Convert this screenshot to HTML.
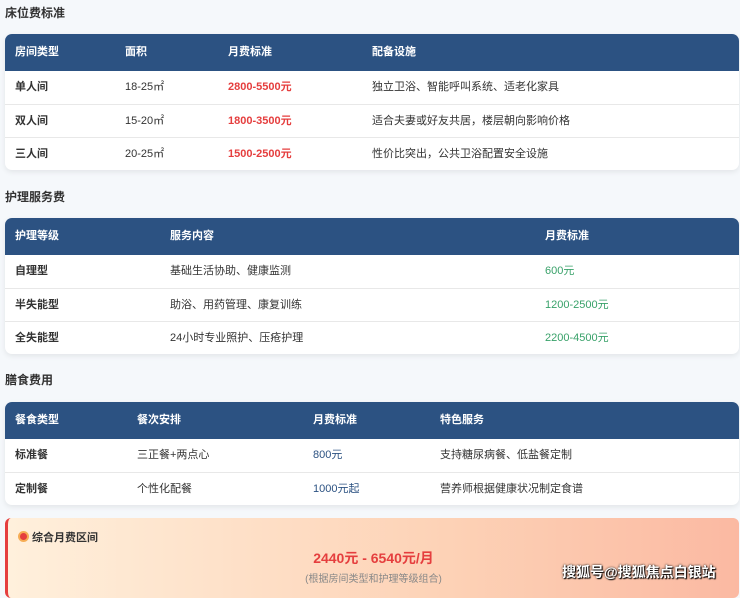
<!DOCTYPE html>
<html><head><meta charset="utf-8"><style>
body{margin:0;background:#f5f8fb;font-family:"Liberation Sans","Noto Sans CJK SC",sans-serif;font-size:11px;color:#333;width:740px;height:587px;overflow:hidden;position:relative}
h3{position:absolute;left:5px;margin:0;font-size:12px;font-weight:bold;color:#333}
.t{position:absolute;left:5px;width:734px;background:#fff;border-radius:7px;box-shadow:0 2px 6px rgba(0,0,0,.08);overflow:hidden}
.r{position:relative;height:33px;border-top:1px solid #e8e8e8;box-sizing:border-box}
.r span{position:absolute;top:0;line-height:33px;white-space:nowrap}
.h{background:#2c5282;color:#fff;font-weight:bold;height:37px;border:0}
.h span{line-height:37px}
.b{font-weight:bold}
.red{color:#e53e3e;font-weight:bold}
.g{color:#38a169}
.bl{color:#2c5282}
</style></head><body>
<h3 style="top:4px">床位费标准</h3>
<div class="t" style="top:34px">
<div class="r h"><span style="left:10px">房间类型</span><span style="left:120px">面积</span><span style="left:223px">月费标准</span><span style="left:367px">配备设施</span></div>
<div class="r" style="border:0"><span class="b" style="left:10px">单人间</span><span style="left:120px">18-25㎡</span><span class="red" style="left:223px">2800-5500元</span><span style="left:367px">独立卫浴、智能呼叫系统、适老化家具</span></div>
<div class="r"><span class="b" style="left:10px">双人间</span><span style="left:120px">15-20㎡</span><span class="red" style="left:223px">1800-3500元</span><span style="left:367px">适合夫妻或好友共居，楼层朝向影响价格</span></div>
<div class="r"><span class="b" style="left:10px">三人间</span><span style="left:120px">20-25㎡</span><span class="red" style="left:223px">1500-2500元</span><span style="left:367px">性价比突出，公共卫浴配置安全设施</span></div>
</div>
<h3 style="top:188px">护理服务费</h3>
<div class="t" style="top:218px">
<div class="r h"><span style="left:10px">护理等级</span><span style="left:165px">服务内容</span><span style="left:540px">月费标准</span></div>
<div class="r" style="border:0"><span class="b" style="left:10px">自理型</span><span style="left:165px">基础生活协助、健康监测</span><span class="g" style="left:540px">600元</span></div>
<div class="r"><span class="b" style="left:10px">半失能型</span><span style="left:165px">助浴、用药管理、康复训练</span><span class="g" style="left:540px">1200-2500元</span></div>
<div class="r"><span class="b" style="left:10px">全失能型</span><span style="left:165px">24小时专业照护、压疮护理</span><span class="g" style="left:540px">2200-4500元</span></div>
</div>
<h3 style="top:371px">膳食费用</h3>
<div class="t" style="top:402px">
<div class="r h"><span style="left:10px">餐食类型</span><span style="left:132px">餐次安排</span><span style="left:308px">月费标准</span><span style="left:435px">特色服务</span></div>
<div class="r" style="border:0"><span class="b" style="left:10px">标准餐</span><span style="left:132px">三正餐+两点心</span><span class="bl" style="left:308px">800元</span><span style="left:435px">支持糖尿病餐、低盐餐定制</span></div>
<div class="r"><span class="b" style="left:10px">定制餐</span><span style="left:132px">个性化配餐</span><span class="bl" style="left:308px">1000元起</span><span style="left:435px">营养师根据健康状况制定食谱</span></div>
</div>
<div style="position:absolute;left:5px;top:518px;width:734px;height:80px;border-left:3px solid #e53e3e;border-radius:6px;background:linear-gradient(90deg,#fff0dc,#fdd2b6 60%,#fbb9a2);box-sizing:border-box">
<div style="position:absolute;left:10px;top:11px;font-weight:bold;font-size:11px"><span style="display:inline-block;width:11px;height:11px;border-radius:50%;background:#e53e3e;border:2px solid #f6ad55;box-sizing:border-box;vertical-align:-1px;margin-right:3px"></span>综合月费区间</div>
<div style="position:absolute;left:0;right:0;top:30px;text-align:center;color:#e53e3e;font-weight:bold;font-size:14px">2440元 - 6540元/月</div>
<div style="position:absolute;left:0;right:0;top:52px;text-align:center;color:#888;font-size:10px">(根据房间类型和护理等级组合)</div>
<div style="position:absolute;left:554px;top:44px;color:#fff;font-size:14px;font-weight:bold;text-shadow:0 0 2px #000,1px 1px 1px #000">搜狐号@搜狐焦点白银站</div>
</div>
</body></html>
